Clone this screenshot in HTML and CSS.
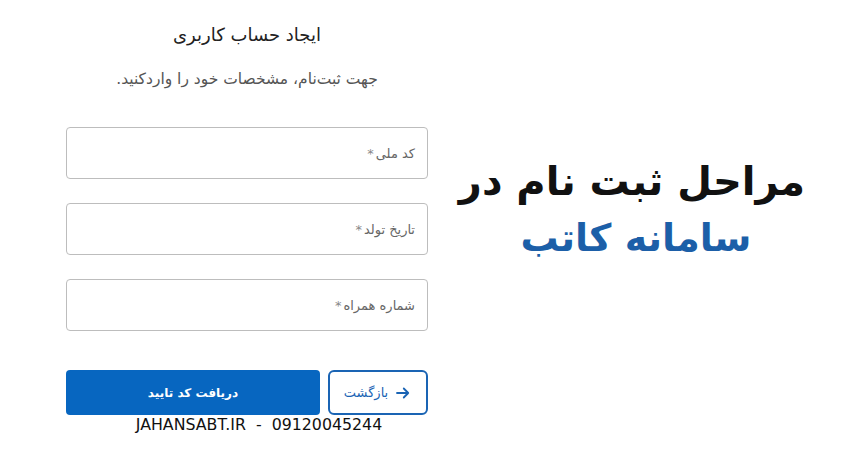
FILE: index.html
```html
<!DOCTYPE html>
<html lang="fa">
<head>
    <meta charset="UTF-8">
    <title>ایجاد حساب کاربری</title>
    <link rel="stylesheet" href="styles.css">
</head>
<body>
    <div class="page">
        <div class="form">
            <h2>ایجاد حساب کاربری</h2>
            <p class="sub">جهت ثبت‌نام، مشخصات خود را واردکنید.</p>
            <div class="field">کد ملی<span>*</span></div>
            <div class="field">تاریخ تولد<span>*</span></div>
            <div class="field">شماره همراه<span>*</span></div>
            <div class="actions">
                <button class="back">
                    <svg width="18" height="18" viewBox="0 0 24 24" fill="none" stroke="#1a64b4" stroke-width="2.4" stroke-linecap="round" stroke-linejoin="round"><path d="M4 12h15M13 6l6 6-6 6"/></svg>
                    بازگشت
                </button>
                <button class="primary">دریافت کد تایید</button>
            </div>
            <div class="footer">JAHANSABT.IR &nbsp;- &nbsp;09120045244</div>
        </div>
        <div class="headline">
            <h1>مراحل ثبت نام در</h1>
            <h3>سامانه کاتب</h3>
        </div>
    </div>
</body>
</html>
```

FILE: styles.css
```css
body {
    margin: 0;
    background: #fff;
    font-family: "DejaVu Sans", sans-serif;
}
.page {
    display: flex;
    width: 850px;
    height: 450px;
}
.form {
    width: 362px;
    margin-left: 66px;
    direction: rtl;
    display: flex;
    flex-direction: column;
}
.form h2 {
    margin: 24px 0 0;
    text-align: center;
    font-size: 18px;
    font-weight: normal;
    color: #222;
}
.sub {
    margin: 25px 0 0;
    text-align: center;
    font-size: 15.5px;
    color: #555;
}
.field {
    height: 52px;
    margin-top: 24px;
    border: 1px solid #bdbdbd;
    border-radius: 4px;
    box-sizing: border-box;
    padding: 0 12px;
    display: flex;
    align-items: center;
    font-size: 13px;
    color: #666;
}
.sub + .field {
    margin-top: 39px;
}
.field span {
    color: #888;
    margin-right: 2px;
}
.actions {
    display: flex;
    gap: 8px;
    margin-top: 39px;
    height: 45px;
}
.actions button {
    font-family: "DejaVu Sans", sans-serif;
    cursor: pointer;
}
.back {
    width: 100px;
    background: #fff;
    border: 2px solid #1a64b4;
    border-radius: 6px;
    color: #1a64b4;
    font-size: 13px;
    display: flex;
    align-items: center;
    justify-content: center;
    gap: 6px;
    padding: 0;
}
.primary {
    flex: 1;
    background: #0766c0;
    border: none;
    border-radius: 4px;
    color: #fff;
    font-size: 12px;
    font-weight: bold;
}
.footer {
    direction: ltr;
    text-align: center;
    font-size: 15.8px;
    color: #111;
    margin-top: 0;
    padding-left: 24px;
    white-space: nowrap;
}
.headline {
    flex: 1;
    direction: rtl;
    text-align: center;
    padding: 158px 6px 0 0;
}
.headline h1 {
    margin: 0 8px 0 0;
    font-size: 40px;
    font-weight: bold;
    color: #111;
    letter-spacing: 1px;
}
.headline h3 {
    margin: 12px 0 0;
    font-size: 38px;
    font-weight: bold;
    color: #1c5fa8;
}
```
